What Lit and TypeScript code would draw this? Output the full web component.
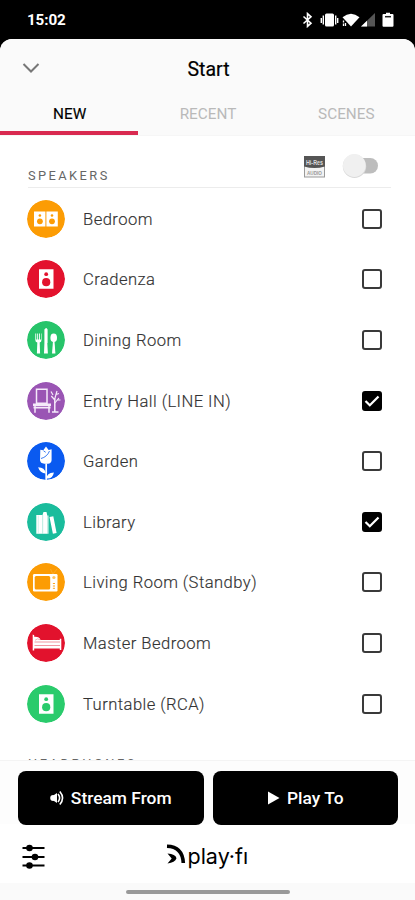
import { LitElement, html, css, svg } from "lit";
import { customElement } from "lit/decorators.js";
import { classMap } from "lit/directives/class-map.js";

const speaker = (color: string) => svg`
  <path fill="#fff" d="M12 9.2h14.500v19.500H12z"/>
  <circle cx="19.2" cy="14.2" r="1.9" fill=${color}/>
  <circle cx="19.2" cy="22.2" r="4.1" fill=${color}/>`;

const icons: Record<string, (color: string) => unknown> = {
  speaker,
  pair: (color) => svg`
    <path fill="#fff" d="M7 11.500h11.400v15H7zM19.400 11.500h11.400v15H19.400z"/>
    <circle cx="12.900" cy="15.500" r="1.300" fill=${color}/><circle cx="12.900" cy="21.300" r="2.900" fill=${color}/>
    <circle cx="25" cy="15.500" r="1.300" fill=${color}/><circle cx="25" cy="21.300" r="2.900" fill=${color}/>`,
  dining: () => svg`
    <path fill="#fff" d="M8.300 12.500h.9v6h1v-6h.9v6h1v-6h.9v6h1v-6h.5v6.500q0 2-1.800 2.500l.4 11h-3.200l.4-11q-2-.5-2-2.500zM17.400 8.500q2-3 3.200 0v13.500h-.3l.6 10.500h-3.900l.4-10.500z"/>
    <ellipse cx="26.700" cy="16.700" rx="3.300" ry="4.300" fill="#fff"/>
    <path fill="#fff" d="M26 20h1.500l.9 12.500H25z"/>`,
  hall: () => svg`
    <g fill="none" stroke="#f5eafa"><path stroke-width="1.500" d="M9.500 7.200H20v14H9.500z"/>
    <path stroke-width="2.600" d="M6 22.900h18"/><path stroke-width="1.500" d="M8 23.500v7.200M22 23.500v7.200M6.500 25.700h17M25 30h6.500M27.800 30v-14"/>
    <path stroke-width="1.200" d="M27.900 21l4-5M27.800 18l-3.500-4M28 16l2-7M26 13l-2-3.500M29 12.500l3-1M30.500 18h3"/></g>`,
  garden: () => svg`
    <path fill="#fff" d="M13.300 7.700l3 .6L19 4.500l2.600 3.400 3-.7v11q-.4 3.200-3.700 3.500h-3.600q-4-.5-4.300-3.500z"/>
    <path d="M14 16.500q6-1.500 8.500-7.500M16.500 8.800l2.200 1.500" fill="none" stroke="#0a5af0" stroke-width=".8"/>
    <path d="M19.200 21.500V38" stroke="#fff" stroke-width="1.700"/>
    <path fill="#fff" d="M18.900 31.500q-6-.5-7.800-6.300 6.600.1 7.800 6.300zM19.700 36.500q-.2-5.500 7.200-6-1.200 6.600-7.200 6z"/>`,
  library: () => svg`
    <path fill="#fff" d="M9.300 12h5.700v18.700H9.300zM16.500 9h3l.7 3v18.700h-4.700V12zM22.500 14l3.800-.7 3.300 16.600-3.700.8z"/>
    <path fill="#c5eee5" d="M15 12h1.200v18.700H15zM20 12.500h1.600v18.200H20z"/>
    <path d="M11.300 12.500v18" stroke="#c5eee5" stroke-width=".7"/>`,
  tv: (color) => svg`
    <rect x="6" y="11" width="24.500" height="17.500" rx="1.200" fill="#fff"/>
    <rect x="7.700" y="12.900" width="15.500" height="13.500" rx="1.500" fill=${color}/>
    <circle cx="26.900" cy="14.500" r="1.600" fill="#ffc35e"/><path d="M25.900 20.500H28M25.900 23H28M25.900 25.300H28" stroke=${color} stroke-width=".9"/>
    <path d="M25.800 11L23.500 6M26 11l4-5" stroke="#ffc35e" stroke-width=".6" opacity=".7"/>`,
  bed: () => svg`
    <path fill="#fff" d="M5.700 10.500l1.500.8v1.500q5.300-.4 6.300 3.200h19.300v-1.200h1.500V26h-1.500v-1.600H7.200v2.100H5.700z"/>
    <path d="M7.500 18h25.500M7.500 21.500h25.500" stroke="#ee7d8b" stroke-width=".8"/>
    <path d="M8 16.300q2.500-2.600 5.200-.5" stroke="#ee7d8b" stroke-width=".6" fill="none"/>`,
};

interface Row { name: string; icon: string; color: string; on?: boolean }

const rows: Row[] = [
  { name: "Bedroom", icon: "pair", color: "#fc9c04" },
  { name: "Cradenza", icon: "speaker", color: "#e3122d" },
  { name: "Dining Room", icon: "dining", color: "#27c46a" },
  { name: "Entry Hall (LINE IN)", icon: "hall", color: "#9a55b4", on: true },
  { name: "Garden", icon: "garden", color: "#0a5af0" },
  { name: "Library", icon: "library", color: "#1abc9c", on: true },
  { name: "Living Room (Standby)", icon: "tv", color: "#fc9c04" },
  { name: "Master Bedroom", icon: "bed", color: "#e2122d" },
  { name: "Turntable (RCA)", icon: "speaker", color: "#2acb6c" },
];

@customElement("app-root")
export class AppRoot extends LitElement {
  static styles = css`
    :host { display: block; height: 900px; background: #000; font-family: Roboto, sans-serif; color: #000; overflow: hidden; }
    * { box-sizing: border-box; }
    svg { display: block; }
    .status { height: 39px; padding: 1px 20px 0 27px; display: flex; align-items: center; justify-content: space-between; color: #fff; font-size: 15.200px; font-weight: 700; letter-spacing: -.1px; }
    .sheet { height: 861px; background: #fff; border-radius: 12px 12px 0 0; display: flex; flex-direction: column; overflow: hidden; }
    .top { background: #fafafa; flex: none; border-bottom: 1px solid #f6f6f6; }
    .head { height: 60px; display: grid; grid-template-columns: 60px 1fr 60px; align-items: center; padding-top: 1px; }
    .head svg { margin: -4px 0 0 22px; }
    .title { text-align: center; font-size: 19.500px; font-weight: 400; -webkit-text-stroke: .2px #000; padding-left: 2px; }
    .tabs { display: grid; grid-template-columns: repeat(3, 1fr); height: 36px; }
    .tab { font-size: 15.300px; line-height: 30px; text-align: center; color: #b9b9b9; border-bottom: 4px solid transparent; padding-left: 1px; }
    .tab.active { color: #000; border-color: #d92a50; -webkit-text-stroke: .15px #000; }
    .list { flex: none; height: 624px; overflow: hidden; }
    .section { height: 51.500px; margin: 0 24px 0 28px; border-bottom: 1px solid #ececec; display: flex; align-items: flex-start; }
    .label { font-size: 12.800px; letter-spacing: 2.450px; color: #666; line-height: 16px; }
    .section .label { flex: 1; margin-top: 31.500px; }
    .hires { margin-top: 20px; }
    .toggle { margin: 17px 12px 0 17px; }
    .row { height: 60.600px; padding: 0 32px 0 27px; display: flex; align-items: center; }
    .rows { padding-top: 1.100px; }
    .disc { width: 38px; height: 38px; flex: none; overflow: hidden; border-radius: 50%; }
    .name { flex: 1; padding: 1px 0 0 18px; font-size: 16.600px; letter-spacing: .45px; color: #333; font-weight: 300; -webkit-text-stroke: .15px #333; white-space: nowrap; }
    .box { width: 20px; height: 20px; border: 2px solid #3a3a3a; border-radius: 3px; margin-right: 1px; flex: none; }
    .box.on { background: #000; border-color: #000; }
    .next { padding: 22px 0 0 28px; letter-spacing: 2.600px; }
    .actions { background: #fdfdfd; border-top: 1px solid #f4f4f4; padding: 9.500px 17px 0 18px; display: grid; grid-template-columns: 1fr 1fr; gap: 9px; flex: none; height: 64px; }
    .btn { height: 54px; background: #000; color: #fff; border-radius: 8px; display: flex; align-items: center; justify-content: center; gap: 7px; font-size: 17.400px; font-weight: 500; padding-top: 1px; }
    .brandbar { flex: 1; display: grid; grid-template-columns: 1fr 84px 1fr; align-items: start; padding-top: 20px; }
    .brandbar .sliders { margin: 0 0 0 22px; }
    .brand { display: flex; align-items: flex-start; font-family: Inter, sans-serif; font-size: 21.500px; line-height: 26px; }
    .brand svg { flex: none; }
    .brand span { margin-left: 2px; margin-top: -1px; white-space: nowrap; letter-spacing: 0; }
    .nav { height: 17px; background: #fafafa; flex: none; display: flex; justify-content: center; padding-top: 7px; }
    .pill { width: 164px; height: 3.500px; border-radius: 2px; background: #999; }
    .hi { font: 700 7.500px "Liberation Sans", sans-serif; fill: #ddd; }
    .au { font: 700 6px "Liberation Sans", sans-serif; fill: #999; }
  `;

  render() {
    return html`
      <div class="status">
        <span>15:02</span>
        <svg width="93" height="16" viewBox="0 0 93 16">
          <path d="M1.500 4.500l7.500 6.700-3.500 3.200V1.600L9 4.800l-7.500 6.700" fill="none" stroke="#fff" stroke-width="1.600"/>
          <rect x="23" y="1.500" width="9" height="13" rx="1.500" fill="#fff"/>
          <path d="M21.300 3.500v9M33.700 3.500v9M19.300 6v5M35.700 6v5" stroke="#fff" stroke-width="1.400"/>
          <path d="M40.500 5.200q8.500-7 17 0l-8.500 9.300z" fill="#fff"/>
          <path d="M41.500 8.500v2M41.500 11.500v2.500M43.500 11v3" stroke="#fff" stroke-width="1.300"/>
          <path d="M59 14.500L73 1v13.500z" fill="#555"/><path d="M59 14.500l6-5.800v5.800z" fill="#fff"/>
          <path d="M81.500 2H84V.7h4V2h2.500q1 0 1 1v10.700q0 1-1 1h-9q-1 0-1-1V3q0-1 1-1z" fill="#fff"/>
          <path d="M83 4.700h6" stroke="#222" stroke-width="1.500"/>
        </svg>
      </div>
      <div class="sheet">
        <div class="top">
          <div class="head">
            <svg width="18" height="12" viewBox="0 0 18 12"><path d="M1.500 2l7.500 7.500L16.500 2" fill="none" stroke="#777" stroke-width="2"/></svg>
            <div class="title">Start</div>
          </div>
          <div class="tabs">
            <div class="tab active">NEW</div><div class="tab">RECENT</div><div class="tab">SCENES</div>
          </div>
        </div>
        <div class="list">
          <div class="section">
            <div class="label">SPEAKERS</div>
            <svg class="hires" width="21" height="22" viewBox="0 0 21 22">
              <rect x=".5" y=".5" width="20" height="20.500" fill="#f3f3f3" stroke="#999"/>
              <path d="M0 0h21v10.500q-10.500 3-21 0z" fill="#555"/>
              <text class="hi" x="2" y="8.800" textLength="17" lengthAdjust="spacingAndGlyphs">Hi-Res</text>
              <text class="au" x="3" y="18.500" textLength="15" lengthAdjust="spacingAndGlyphs">AUDIO</text>
            </svg>
            <svg class="toggle" width="37" height="26" viewBox="0 0 37 26">
              <rect x="12" y="5" width="24" height="15.500" rx="7.700" fill="#bdbdbd"/>
              <circle cx="12.500" cy="13.300" r="11.700" fill="#d9d9d9"/><circle cx="12.300" cy="12.500" r="11.400" fill="#f0f0f0"/>
            </svg>
          </div>
          <div class="rows">
            ${rows.map((r) => html`
              <div class="row">
                <svg class="disc" viewBox="0 0 38 38"><circle cx="19" cy="19" r="19" fill=${r.color}/>${icons[r.icon](r.color)}</svg>
                <div class="name">${r.name}</div>
                <div class=${classMap({ box: true, on: !!r.on })}>
                  ${r.on ? html`<svg width="16" height="16" viewBox="0 0 16 16"><path d="M1.500 8l4.300 4.300L14.500 3.500" fill="none" stroke="#fff" stroke-width="2.200"/></svg>` : ""}
                </div>
              </div>`)}
          </div>
          <div class="label next">HEADPHONES</div>
        </div>
        <div class="actions">
          <div class="btn">
            <svg width="14" height="16" viewBox="0 0 14 16"><circle cx="3.200" cy="8" r="3" fill="#fff"/><path d="M4 5l3-2v10L4 11z" fill="#fff"/><path d="M8 4q3.200 4 0 8M9.800 1.500q5.500 6.500 0 13" fill="none" stroke="#fff" stroke-width="1.600"/></svg>
            Stream From
          </div>
          <div class="btn">
            <svg width="13" height="14" viewBox="0 0 13 14"><path d="M1 .5L12.500 7 1 13.500z" fill="#fff"/></svg>
            Play To
          </div>
        </div>
        <div class="brandbar">
          <svg class="sliders" width="23" height="25" viewBox="0 0 23 25"><path d="M.5 4h22M.5 13h22M.5 21.500h22" stroke="#000" stroke-width="1.800"/><circle cx="7.500" cy="4" r="3.300"/><circle cx="13" cy="13" r="3.300"/><circle cx="7.500" cy="21.500" r="3.300"/></svg>
          <div class="brand">
            <svg width="20" height="22" viewBox="0 0 20 22"><path d="M1 2.200Q16.500 2.500 17.300 19" fill="none" stroke="#000" stroke-width="3.600"/><path d="M1.500 9.500q8 .5 9 4.700-1.500 4.300-9 5.300l4.200-5z"/></svg>
            <span>play·fı</span>
          </div>
        </div>
        <div class="nav"><div class="pill"></div></div>
      </div>`;
  }
}
